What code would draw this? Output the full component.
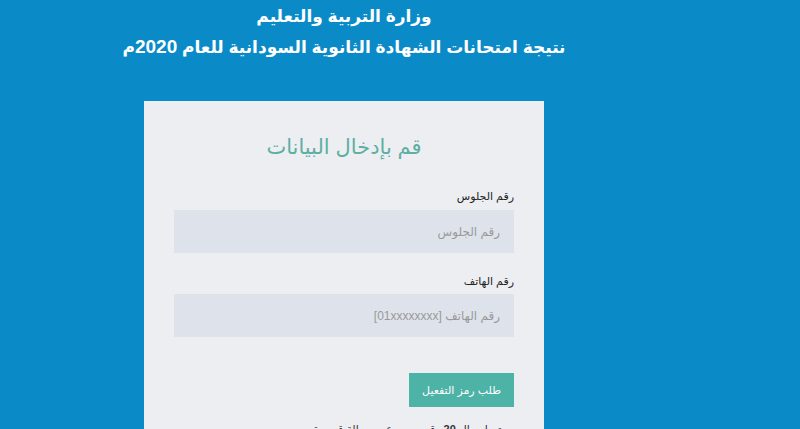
import React from 'react';

const App: React.FC = () => {
    return (
        <div
            dir="rtl"
            className="h-[429px] w-[800px] overflow-hidden bg-[#0a8bc8]"
            style={{ fontFamily: '"Liberation Sans", "DejaVu Sans", sans-serif' }}
        >
            <div className="mr-[256px] w-[400px]">
                {/* عنوان الصفحة */}
                <div className="pt-[2px] text-center font-bold whitespace-nowrap text-white">
                    <h1 className="text-[17px] leading-[30px]">وزارة التربية والتعليم</h1>
                    <h2 className="-mx-[40px] h-[30px] text-[17px] leading-[30px]">
                        نتيجة امتحانات الشهادة الثانوية السودانية للعام <span className="text-[19px]">2020</span>م
                    </h2>
                </div>

                <div className="mt-[39px] bg-[#eceef2] px-[30px] pt-[28px] pb-[20px]">
                    <h3 className="text-center text-[21px] leading-[36px] text-[#5eafa3]">قم بإدخال البيانات</h3>

                    <div className="mt-[22px]">
                        <label className="block text-[11px] leading-[18px] text-[#222]">رقم الجلوس</label>
                        <input
                            className="mt-[5px] block h-[43px] w-full bg-[#dee3eb] px-[14px] text-[12px] text-[#555] outline-none placeholder:text-[#999]"
                            placeholder="رقم الجلوس"
                        />
                    </div>

                    <div className="mt-[19px]">
                        <label className="block text-[11px] leading-[18px] text-[#222]">رقم الهاتف</label>
                        <input
                            className="mt-[4px] block h-[43px] w-full bg-[#dee3eb] px-[14px] text-[12px] text-[#555] outline-none placeholder:text-[#999]"
                            placeholder="رقم الهاتف [01xxxxxxxx]"
                        />
                    </div>

                    <button className="mt-[36px] h-[34px] w-[105px] bg-[#4db3a6] text-[11px] text-white">
                        طلب رمز التفعيل
                    </button>

                    <p className="mt-[14px] text-[11px] text-[#333]">
                        سيتم ارسال <b>20</b> رقم سري عبر رسالة قصيرة
                    </p>
                </div>
            </div>
        </div>
    );
};

export default App;
